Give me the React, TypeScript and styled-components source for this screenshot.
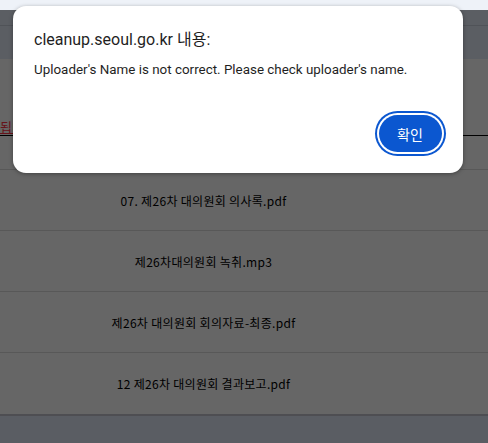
import React from "react";
import styled, { createGlobalStyle } from "styled-components";

const GlobalStyle = createGlobalStyle`
  html, body {
    margin: 0;
    padding: 0;
    background: #ffffff;
  }
  body {
    width: 488px;
    height: 443px;
    overflow: hidden;
    font-family: "Noto Sans CJK KR", "Noto Sans", sans-serif;
  }
`;

const Page = styled.div`
  position: relative;
  width: 488px;
  height: 443px;
  overflow: hidden;
  display: flex;
  flex-direction: column;
  background: #ffffff;
`;

const TopStrip = styled.div`
  height: 10px;
  flex-shrink: 0;
  background: #eef2f8;
`;

const Main = styled.div`
  position: relative;
  flex: 1;
  display: flex;
  flex-direction: column;
  background: #ffffff;
`;

const NavBar = styled.div`
  height: 15px;
  background: #e4ebf8;
  border-bottom: 1px solid #c8d0dc;
`;

const SubHeader = styled.div`
  height: 33px;
  background: #e4ebf8;
`;

const Notice = styled.div`
  height: 76px;
  display: flex;
  align-items: flex-end;
  border-bottom: 1px solid #000000;
  overflow: hidden;
`;

const NoticeText = styled.span`
  margin-bottom: 1px;
  font-family: "Noto Sans CJK KR", sans-serif;
  font-size: 13px;
  line-height: 14px;
  color: #ff3344;
  text-decoration: underline;
  white-space: nowrap;
`;

const Spacer = styled.div`
  height: 33px;
`;

const FileTable = styled.div`
  display: flex;
  flex-direction: column;
  border-top: 1px solid #dcdcdc;
`;

const FileRow = styled.div`
  display: grid;
  grid-template-columns: 407px 1fr;
  height: 60px;
  border-bottom: 1px solid #dcdcdc;
  &:last-child {
    border-bottom: 2px solid #c4c3cc;
    height: 61px;
  }
`;

const FileName = styled.div`
  display: flex;
  align-items: center;
  justify-content: center;
  font-family: "Noto Sans CJK KR", sans-serif;
  font-size: 12px;
  letter-spacing: 0.3px;
  color: #000000;
  white-space: nowrap;
`;

const Footer = styled.div`
  flex: 1;
  background: #e2e8f7;
`;

const Dim = styled.div`
  position: absolute;
  inset: 0;
  background: rgba(0, 0, 0, 0.6);
`;

const Dialog = styled.div`
  position: absolute;
  top: 6px;
  left: 13px;
  width: 450px;
  height: 167px;
  box-sizing: border-box;
  padding: 24px 17px 17px 21px;
  display: flex;
  flex-direction: column;
  background: #ffffff;
  border-radius: 13px;
  box-shadow: 0 1px 4px rgba(0, 0, 0, 0.35);
`;

const Title = styled.div`
  font-family: "Segoe UI", Roboto, "Noto Sans CJK KR", sans-serif;
  font-size: 16px;
  line-height: 20px;
  color: #1f1f1f;
`;

const Message = styled.div`
  margin-top: 11px;
  font-family: "Segoe UI", Roboto, "Noto Sans CJK KR", sans-serif;
  font-size: 13.4px;
  line-height: 18px;
  color: #1f1f1f;
`;

const Actions = styled.div`
  margin-top: auto;
  display: flex;
  justify-content: flex-end;
`;

const OkButton = styled.button`
  width: 63px;
  height: 37px;
  margin: 4px;
  border: none;
  border-radius: 19px;
  background: #0b57d0;
  color: #ffffff;
  font-family: "Noto Sans CJK KR", sans-serif;
  font-size: 14px;
  box-shadow: 0 0 0 2px #ffffff, 0 0 0 4px #0b57d0;
  cursor: pointer;
  padding: 0 1px 0 0;
`;

const files = [
  "07. 제26차 대의원회 의사록.pdf",
  "제26차대의원회 녹취.mp3",
  "제26차 대의원회 회의자료-최종.pdf",
  "12 제26차 대의원회 결과보고.pdf",
];

export default function App() {
  return (
    <>
      <GlobalStyle />
      <Page>
        <TopStrip />
        <Main>
          <NavBar />
          <SubHeader />
          <Notice>
            <NoticeText>됩니다.</NoticeText>
          </Notice>
          <Spacer />
          <FileTable>
            {files.map((f) => (
              <FileRow key={f}>
                <FileName>{f}</FileName>
                <div />
              </FileRow>
            ))}
          </FileTable>
          <Footer />
          <Dim />
        </Main>
        <Dialog role="alertdialog">
          <Title>cleanup.seoul.go.kr 내용:</Title>
          <Message>Uploader's Name is not correct. Please check uploader's name.</Message>
          <Actions>
            <OkButton>확인</OkButton>
          </Actions>
        </Dialog>
      </Page>
    </>
  );
}
